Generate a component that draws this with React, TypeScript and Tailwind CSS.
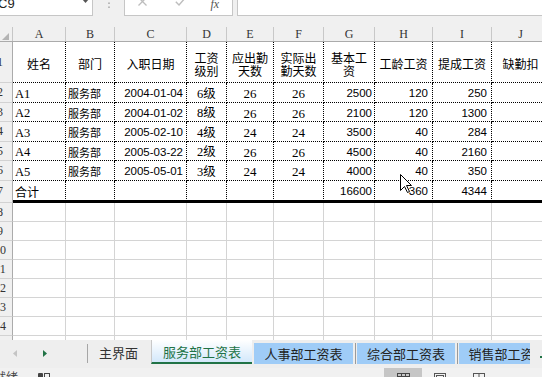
import React from 'react';

const CJK = "font-['Noto_Sans_CJK_SC',sans-serif]";
const SERIF = "font-['Liberation_Serif','Noto_Sans_CJK_SC',serif]";
const SANS = "font-['Liberation_Sans','Noto_Sans_CJK_SC',sans-serif]";

const cols = [
  { w: 'w-[53px]', l: 'A' },
  { w: 'w-[49px]', l: 'B' },
  { w: 'w-[72px]', l: 'C' },
  { w: 'w-[40px]', l: 'D' },
  { w: 'w-[47px]', l: 'E' },
  { w: 'w-[50px]', l: 'F' },
  { w: 'w-[51px]', l: 'G' },
  { w: 'w-[58px]', l: 'H' },
  { w: 'w-[59px]', l: 'I' },
  { w: 'w-[58px]', l: 'J' },
];

const colStyle = [
  `justify-start pl-[2px] ${SERIF} text-[12.5px]`,
  `justify-start pl-[2px] ${CJK} text-[11px]`,
  `justify-end pr-[3px] ${SANS} text-[11.5px]`,
  `justify-center ${SERIF} text-[12.5px]`,
  `justify-center ${SERIF} text-[13px]`,
  `justify-center ${SERIF} text-[13px]`,
  `justify-end pr-[2px] ${SANS} text-[11.5px]`,
  `justify-end pr-[4px] ${SANS} text-[11.5px]`,
  `justify-end pr-[4px] ${SANS} text-[11.5px]`,
  `justify-center ${SANS} text-[11.5px]`,
];

const head: string[][] = [
  ['姓名'],
  ['部门'],
  ['入职日期'],
  ['工资', '级别'],
  ['应出勤', '天数'],
  ['实际出', '勤天数'],
  ['基本工', '资'],
  ['工龄工资'],
  ['提成工资'],
  ['缺勤扣'],
];

const data: string[][] = [
  ['A1', '服务部', '2004-01-04', '6级', '26', '26', '2500', '120', '250', ''],
  ['A2', '服务部', '2004-01-02', '8级', '26', '26', '2100', '120', '1300', ''],
  ['A3', '服务部', '2005-02-10', '4级', '24', '24', '3500', '40', '284', ''],
  ['A4', '服务部', '2005-03-22', '2级', '26', '26', '4500', '40', '2160', ''],
  ['A5', '服务部', '2005-05-01', '3级', '24', '24', '4000', '40', '350', ''],
];

const total = ['合计', '', '', '', '', '', '16600', '360', '4344', ''];

function RowHead({ n }: { n: string }) {
  return (
    <div className="shrink-0 w-[13px] overflow-hidden flex items-center bg-[#f0f0f0] border-r border-r-[#ababab] border-b border-b-[#d2d2d2]">
      <div className={`shrink-0 w-[26px] -ml-[13px] text-center text-[12px] leading-none text-[#333] ${SERIF}`}>{n}</div>
    </div>
  );
}

function FormulaBar() {
  return (
    <div className="h-[16px] overflow-hidden bg-[#f0f0f0]">
      <div className="h-[24px] -mt-[8px] flex">
        <div className="w-[93px] shrink-0 bg-white border-r border-b border-[#c6c6c6] flex items-center overflow-hidden">
          <span className={`-ml-[2px] text-[13px] leading-[13px] text-[#222] ${SANS}`}>C9</span>
          <div className="flex-1" />
          <svg width="7" height="4" className="mr-[3px] mb-[5px]" viewBox="0 0 7 4">
            <polygon points="0,0 7,0 3.5,4" fill="#555" />
          </svg>
        </div>
        <div className="w-[31px] shrink-0 flex items-center justify-center">
          <svg width="2" height="12" viewBox="0 0 2 12">
            <rect x="0.3" y="0.5" width="1.4" height="1.4" fill="#9a9a9a" />
            <rect x="0.3" y="4.5" width="1.4" height="1.4" fill="#9a9a9a" />
            <rect x="0.3" y="8.5" width="1.4" height="1.4" fill="#9a9a9a" />
          </svg>
        </div>
        <div className="w-[109px] shrink-0 bg-white border-l border-r border-b border-[#c6c6c6] flex items-center">
          <svg width="9" height="9" viewBox="0 0 9 9" className="ml-[12.5px] mb-[5px]">
            <path d="M0.5 0.5 L8.5 8.5 M8.5 0.5 L0.5 8.5" stroke="#bdbdbd" strokeWidth="1.3" fill="none" />
          </svg>
          <svg width="11" height="9" viewBox="0 0 11 9" className="ml-[28px] mb-[5px]">
            <path d="M0.8 4.8 L4 8 L10.3 0.8" stroke="#bdbdbd" strokeWidth="1.4" fill="none" />
          </svg>
          <span className={`ml-[25px] mt-[1px] italic text-[12px] leading-[12px] text-[#555] ${SERIF}`}>fx</span>
        </div>
        <div className="ml-[4px] flex-1 bg-white border-l border-b border-[#c6c6c6]" />
      </div>
    </div>
  );
}

function ColumnHeader() {
  return (
    <div className="flex h-[15px] shrink-0 bg-[#f0f0f0] border-b border-b-[#ababab]">
      <div className="shrink-0 w-[13px] border-r border-r-[#c6c6c6] flex items-end justify-end">
        <svg width="7" height="7" viewBox="0 0 7 7" className="mr-[3px] mb-[1px]">
          <polygon points="7,0 7,7 0,7" fill="#b4b4b4" />
        </svg>
      </div>
      {cols.map((c) => (
        <div
          key={c.l}
          className={`${c.w} shrink-0 border-r border-r-[#c8c8c8] flex items-center justify-center text-[12px] leading-none text-[#333] ${SERIF}`}
        >
          {c.l}
        </div>
      ))}
    </div>
  );
}

function Grid() {
  const empty = ['8', '9', '10', '11', '12', '13', '14', '15', '16'];
  return (
    <div className="h-[313px] overflow-hidden shrink-0 flex flex-col">
      <ColumnHeader />
      <div className="flex h-[41px] shrink-0">
        <RowHead n="1" />
        {cols.map((c, i) => (
          <div
            key={c.l}
            className={`${c.w} shrink-0 border-r border-b border-dotted border-black flex flex-col items-center justify-center pt-[3px] text-[12px] leading-[13px] text-black ${CJK}`}
          >
            {head[i].map((line) => (
              <span key={line} className="whitespace-nowrap">{line}</span>
            ))}
          </div>
        ))}
      </div>
      {data.map((r, ri) => (
        <div key={ri} className="flex h-[19.5px] shrink-0">
          <RowHead n={String(ri + 2)} />
          {cols.map((c, i) => (
            <div
              key={c.l}
              className={`${c.w} shrink-0 border-r border-b border-dotted border-black flex items-center pt-[3px] leading-none text-black whitespace-nowrap ${colStyle[i]}`}
            >
              {r[i]}
            </div>
          ))}
        </div>
      ))}
      <div className="flex h-[22.5px] shrink-0">
        <RowHead n="7" />
        {cols.map((c, i) => (
          <div
            key={c.l}
            className={`${c.w} shrink-0 border-r border-dotted border-black border-b-[3px] [border-bottom-style:solid] flex items-center pt-[3px] leading-none text-black whitespace-nowrap ${i === 0 ? `justify-start pl-[2px] ${CJK} text-[12px]` : colStyle[i]}`}
          >
            {total[i]}
          </div>
        ))}
      </div>
      {empty.map((n) => (
        <div key={n} className="flex h-[19px] shrink-0">
          <RowHead n={n} />
          {cols.map((c) => (
            <div key={c.l} className={`${c.w} shrink-0 border-r border-b border-[#d4d4d4]`} />
          ))}
        </div>
      ))}
    </div>
  );
}

function TabBar() {
  const tabCls = `h-[21px] mt-[3px] shrink-0 bg-[#9fccf7] flex items-center justify-center text-[13px] leading-none text-[#222] whitespace-nowrap ${CJK}`;
  return (
    <div className="h-[24px] shrink-0 flex bg-[#eeeeee]">
      <div className="w-[87px] shrink-0 flex items-center">
        <svg width="4" height="7" viewBox="0 0 4 7" className="ml-[13px] mt-[2px]">
          <polygon points="4,0 4,7 0,3.5" fill="#c4c4c4" />
        </svg>
        <svg width="4" height="7" viewBox="0 0 4 7" className="ml-[26px] mt-[2px]">
          <polygon points="0,0 0,7 4,3.5" fill="#217346" />
        </svg>
      </div>
      <div className="w-px h-[19px] mt-[4px] shrink-0 bg-[#a6a6a6]" />
      <div className="w-[442px] shrink-0 flex overflow-hidden">
        <div className={`w-[63px] shrink-0 flex items-center pl-[11px] text-[13px] leading-none text-[#333] ${CJK}`}>主界面</div>
        <div
          className={`w-[101px] shrink-0 bg-linear-to-b from-white to-[#d3e8fb] border-l border-l-[#c8c8c8] border-b-2 border-b-[#217346] flex items-center justify-center text-[13px] leading-none text-[#217346] whitespace-nowrap ${CJK}`}
        >
          服务部工资表
        </div>
        <div className={`w-[99px] ml-[2px] ${tabCls}`}>人事部工资表</div>
        <div className="w-px h-[21px] mt-[3px] mx-[1.5px] shrink-0 bg-[#9a9a9a]" />
        <div className={`w-[98px] ${tabCls}`}>综合部工资表</div>
        <div className="w-px h-[21px] mt-[3px] mx-[1.5px] shrink-0 bg-[#9a9a9a]" />
        <div className={`w-[97px] ${tabCls}`}>销售部工资表</div>
      </div>
      <div className="flex-1 flex items-center">
        <div className="w-[2px] h-[2px] ml-[10px] mt-[9px] bg-[#217346]" />
      </div>
    </div>
  );
}

function StatusBar() {
  return (
    <>
      <div className="h-[4px] shrink-0 bg-[#eeeeee]" />
      <div className="h-[9px] shrink-0 flex bg-[#f1f1f1] overflow-hidden">
        <span className={`-ml-[6px] pt-[3px] text-[12px] leading-none text-[#444] ${CJK}`}>就绪</span>
        <svg width="12" height="10" viewBox="0 0 12 10" className="ml-[20px] mt-[4px] shrink-0">
          <rect x="0" y="1" width="5" height="5" rx="1" fill="#444" />
          <rect x="6.5" y="1.5" width="5" height="4" fill="none" stroke="#444" strokeWidth="1" />
        </svg>
        <div className="w-[334px] shrink-0" />
        <div className="w-[38px] shrink-0 bg-[#c6c6c6] flex justify-center">
          <svg width="13" height="10" viewBox="0 0 13 10" className="mt-[5px]">
            <rect x="0.5" y="0.5" width="12" height="9" fill="none" stroke="#444" />
            <path d="M4.5 0.5 V9.5 M8.5 0.5 V9.5 M0.5 3.5 H12.5" stroke="#444" />
          </svg>
        </div>
        <svg width="12" height="10" viewBox="0 0 12 10" className="ml-[12px] mt-[5px] shrink-0">
          <rect x="0.5" y="0.5" width="11" height="9" fill="none" stroke="#555" />
          <rect x="2.5" y="2.5" width="7" height="6" fill="none" stroke="#555" />
        </svg>
        <svg width="12" height="10" viewBox="0 0 12 10" className="ml-[27px] mt-[5px] shrink-0">
          <rect x="0.5" y="0.5" width="11" height="9" fill="none" stroke="#555" />
          <path d="M6 0.5 V9.5 M0.5 4.5 H11.5" stroke="#555" />
        </svg>
      </div>
    </>
  );
}

export default function App() {
  return (
    <div className="relative w-[542px] h-[377px] overflow-hidden bg-white flex flex-col">
      <FormulaBar />
      <div className="h-[11px] shrink-0 bg-[#f0f0f0]" />
      <Grid />
      <TabBar />
      <StatusBar />
      <svg
        width="13"
        height="20"
        viewBox="0 0 13 20"
        className="absolute left-[400px] top-[174px] pointer-events-none"
      >
        <polygon
          points="0.5,0.5 0.5,16.5 4.5,12.5 7.5,18.5 9.5,17.5 6.5,11.5 11.5,11.5"
          fill="white"
          stroke="black"
          strokeWidth="1"
          strokeLinejoin="miter"
        />
      </svg>
    </div>
  );
}
